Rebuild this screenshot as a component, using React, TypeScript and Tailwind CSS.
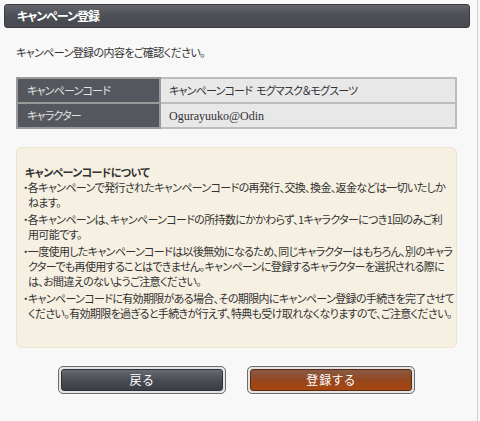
const jp = "font-['Noto_Sans_CJK_JP','Noto_Sans',sans-serif] [font-feature-settings:'palt']";

const notes: string[][] = [
  ["・各キャンペーンで発行されたキャンペーンコードの再発行、交換、換金、返金などは一切いたしか", "ねます。"],
  ["・各キャンペーンは、キャンペーンコードの所持数にかかわらず、1キャラクターにつき1回のみご利", "用可能です。"],
  [
    "・一度使用したキャンペーンコードは以後無効になるため、同じキャラクターはもちろん、別のキャラ",
    "クターでも再使用することはできません。キャンペーンに登録するキャラクターを選択される際に",
    "は、お間違えのないようご注意ください。",
  ],
  [
    "・キャンペーンコードに有効期限がある場合、その期限内にキャンペーン登録の手続きを完了させて",
    "ください。有効期限を過ぎると手続きが行えず、特典も受け取れなくなりますので、ご注意ください。",
  ],
];

function ActionButton({ label, tone }: { label: string; tone: "dark" | "orange" }) {
  const fill =
    tone === "dark"
      ? "bg-gradient-to-b from-[#676a71] via-[#4a4d53] to-[#3a3d43] border-[#2e3035]"
      : "bg-gradient-to-b from-[#875a44] via-[#94461d] to-[#a8470f] border-[#5a2a10]";
  return (
    <button
      type="button"
      className="h-[28px] w-[168px] rounded-[5px] border border-[#6b6b6b] bg-[#e4e4e4] p-[2px]"
    >
      <span
        className={`flex h-full w-full items-center justify-center rounded-[3px] border text-[12px] tracking-[1px] text-white ${fill}`}
      >
        {label}
      </span>
    </button>
  );
}

export default function App() {
  return (
    <div className={`h-[421px] w-[480px] overflow-hidden bg-[#f8f8f8] text-[#333] ${jp}`}>
      <div className="flex h-full w-[478px] flex-col border-r border-[#cfcfcf]">
        <div className="ml-[4px] mt-[4px] flex h-[24px] w-[466px] items-center rounded-[3px] border border-[#3a3c40] bg-gradient-to-b from-[#61646a] via-[#4c4f55] to-[#46494f] pl-[12px] text-[12px] font-bold tracking-[-1px] text-white">
          キャンペーン登録
        </div>

        <div className="px-[16px]">
          <p className="mt-[16px] text-[11px] leading-[16px] tracking-[-0.6px]">
            キャンペーン登録の内容をご確認ください。
          </p>

          <table className="mt-[17px] w-[441px] border-collapse border-2 border-[#9a9a9a] text-[11px] tracking-[-0.8px]">
            <tbody>
              <tr className="h-[25px]">
                <td className="w-[143px] border-2 border-[#9a9a9a] bg-[#54575d] pl-[9px] text-[#e2e2e2]">
                  キャンペーンコード
                </td>
                <td className="border-2 border-[#bdbdbd] bg-[#e8e8e8] pl-[8px]">
                  キャンペーンコード<span className="ml-[4px]">モグマスク＆モグスーツ</span>
                </td>
              </tr>
              <tr className="h-[25px]">
                <td className="border-2 border-[#9a9a9a] bg-[#54575d] pl-[9px] text-[#e2e2e2]">キャラクター</td>
                <td className="border-2 border-[#bdbdbd] bg-[#e8e8e8] pl-[8px] font-['Liberation_Serif',serif] text-[12px] tracking-normal">
                  Ogurayuuko@Odin
                </td>
              </tr>
            </tbody>
          </table>

          <div className="mt-[18px] h-[201px] w-[441px] rounded-[6px] border border-[#efe5cc] bg-[#f6f0e2] pl-[6px] pt-[17px] text-[11px] leading-[15px] tracking-[-0.65px]">
            <p className="pl-[2px] font-bold">キャンペーンコードについて</p>
            <div className="flex flex-col gap-[2px]">
              {notes.map((lines, i) => (
                <p key={i} className="whitespace-nowrap">
                  {lines.map((line, j) => (
                    <span key={j} className={`block ${j > 0 ? "pl-[5px]" : ""}`}>
                      {line}
                    </span>
                  ))}
                </p>
              ))}
            </div>
          </div>

          <div className="mt-[18px] flex justify-center gap-[21px] pr-[4px]">
            <ActionButton label="戻る" tone="dark" />
            <ActionButton label="登録する" tone="orange" />
          </div>
        </div>
      </div>
    </div>
  );
}
